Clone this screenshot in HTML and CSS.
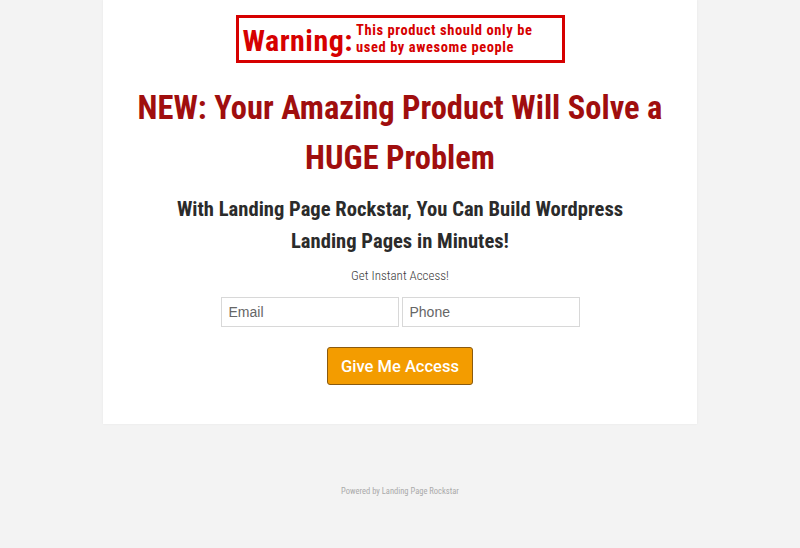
FILE: index.html
```html
<!DOCTYPE html>
<html>
<head>
<meta charset="utf-8">
<link rel="stylesheet" href="styles.css">
</head>
<body>
<div class="page">
  <main class="card">
    <div class="warning-wrap">
      <div class="warning">
        <span class="warn-big">Warning:</span>
        <span class="warn-small">This product should only be<br>used by awesome people</span>
      </div>
    </div>
    <h1 class="headline">NEW: Your Amazing Product Will Solve a<br>HUGE Problem</h1>
    <h2 class="subhead">With Landing Page Rockstar, You Can Build Wordpress<br>Landing Pages in Minutes!</h2>
    <p class="cta-label">Get Instant Access!</p>
    <form class="form">
      <div class="fields">
        <input class="field" type="text" placeholder="Email">
        <input class="field" type="text" placeholder="Phone">
      </div>
      <button class="btn" type="button">Give Me Access</button>
    </form>
  </main>
  <footer class="footer">Powered by Landing Page Rockstar</footer>
</div>
</body>
</html>
```
FILE: styles.css
```css
html, body {
  margin: 0;
  padding: 0;
}
body {
  background: #f3f3f3;
  font-family: Roboto, "Liberation Sans", sans-serif;
}
.page {
  display: flex;
  flex-direction: column;
  align-items: center;
}
.card {
  width: 594px;
  height: 424px;
  background: #fff;
  box-shadow: 0 0 2px rgba(0,0,0,0.06);
  display: flex;
  flex-direction: column;
  align-items: center;
  box-sizing: border-box;
  padding-top: 15px;
}
.warning-wrap {
  display: flex;
  justify-content: center;
}
.warning {
  width: 329px;
  height: 48px;
  box-sizing: border-box;
  border: 3px solid #d60000;
  display: flex;
  align-items: center;
  padding-left: 4px;
  color: #d60000;
  font-stretch: 75%;
  font-weight: 700;
}
.warn-big {
  font-size: 30px;
  line-height: 1;
  letter-spacing: 0.5px;
  margin-top: 4px;
}
.warn-small {
  font-size: 14.5px;
  line-height: 17px;
  letter-spacing: 0.6px;
  margin-left: 3px;
}
.headline {
  margin: 20px 0 0;
  font-size: 32.5px;
  line-height: 50px;
  font-weight: 700;
  font-stretch: 75%;
  color: #a00e0e;
  text-align: center;
}
.subhead {
  margin: 10px 0 0;
  font-size: 20.6px;
  line-height: 32px;
  font-weight: 700;
  font-stretch: 75%;
  color: #2b2b2b;
  text-align: center;
}
.cta-label {
  margin: 11px 0 0;
  font-size: 13px;
  line-height: 16px;
  font-weight: 300;
  font-stretch: 75%;
  color: #3a3a3a;
}
.form {
  margin-top: 13px;
  display: flex;
  flex-direction: column;
  align-items: center;
}
.fields {
  display: flex;
  gap: 3px;
}
.field {
  width: 178px;
  height: 30px;
  box-sizing: border-box;
  border: 1px solid #d8d8d8;
  padding: 0 7px;
  font-family: "Liberation Sans", Arial, sans-serif;
  font-size: 14px;
  color: #555;
  outline: none;
}
.field::placeholder {
  color: #666;
}
.btn {
  margin-top: 20px;
  width: 146px;
  height: 38px;
  background: #f39c00;
  border: 1px solid #8a5a10;
  border-radius: 3px;
  color: #fff;
  font-family: Roboto, sans-serif;
  font-size: 16.5px;
  font-weight: 500;
  padding: 0;
}
.footer {
  margin-top: 62px;
  font-size: 8.5px;
  font-stretch: 75%;
  color: #aaa;
}
```
